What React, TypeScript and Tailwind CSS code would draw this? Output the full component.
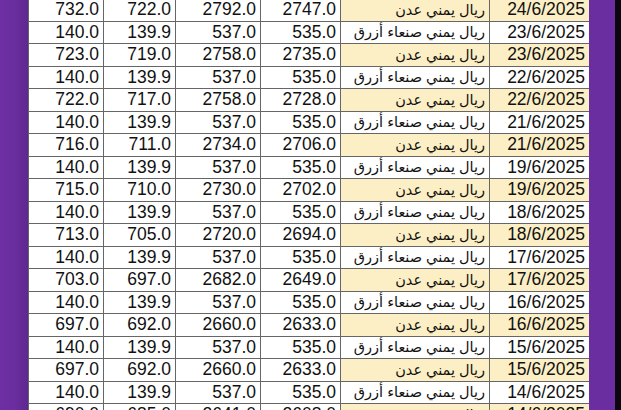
import React from 'react'

type Row = {
    buy: string
    sell: string
    buy2: string
    sell2: string
    aden: boolean
    date: string
}

const ADEN = 'ريال يمني عدن'
const SANAA = 'ريال يمني صنعاء أزرق'

const sanaa = (date: string): Row => ({
    buy: '140.0',
    sell: '139.9',
    buy2: '537.0',
    sell2: '535.0',
    aden: false,
    date
})

const rows: Row[] = [
    { buy: '732.0', sell: '722.0', buy2: '2792.0', sell2: '2747.0', aden: true, date: '24/6/2025' },
    sanaa('23/6/2025'),
    { buy: '723.0', sell: '719.0', buy2: '2758.0', sell2: '2735.0', aden: true, date: '23/6/2025' },
    sanaa('22/6/2025'),
    { buy: '722.0', sell: '717.0', buy2: '2758.0', sell2: '2728.0', aden: true, date: '22/6/2025' },
    sanaa('21/6/2025'),
    { buy: '716.0', sell: '711.0', buy2: '2734.0', sell2: '2706.0', aden: true, date: '21/6/2025' },
    sanaa('19/6/2025'),
    { buy: '715.0', sell: '710.0', buy2: '2730.0', sell2: '2702.0', aden: true, date: '19/6/2025' },
    sanaa('18/6/2025'),
    { buy: '713.0', sell: '705.0', buy2: '2720.0', sell2: '2694.0', aden: true, date: '18/6/2025' },
    sanaa('17/6/2025'),
    { buy: '703.0', sell: '697.0', buy2: '2682.0', sell2: '2649.0', aden: true, date: '17/6/2025' },
    sanaa('16/6/2025'),
    { buy: '697.0', sell: '692.0', buy2: '2660.0', sell2: '2633.0', aden: true, date: '16/6/2025' },
    sanaa('15/6/2025'),
    { buy: '697.0', sell: '692.0', buy2: '2660.0', sell2: '2633.0', aden: true, date: '15/6/2025' },
    sanaa('14/6/2025'),
    { buy: '690.0', sell: '685.0', buy2: '2641.0', sell2: '2608.0', aden: true, date: '14/6/2025' }
]

const cell = 'border border-[#666] pr-[4px] text-right leading-none whitespace-nowrap'

export default function App() {
    return (
        <div
            className="flex h-[410px] w-[621px] overflow-hidden bg-white"
            style={{ fontFamily: '"Liberation Sans", Arial, "DejaVu Sans", sans-serif' }}
        >
            <div className="w-[28px] shrink-0 bg-gradient-to-r from-[#6d2fa2] via-[#6b2e9f] to-[#5e2890]" />

            <div className="w-[561px] shrink-0 -mt-[2px]">
                <table className="w-full table-fixed border-collapse text-[17.5px] text-[#111]">
                    <colgroup>
                        <col className="w-[75px]" />
                        <col className="w-[72px]" />
                        <col className="w-[85px]" />
                        <col className="w-[80px]" />
                        <col className="w-[149px]" />
                        <col className="w-[100px]" />
                    </colgroup>
                    <tbody>
                        {rows.map((r, i) => (
                            <tr key={i} className="h-[22.5px]">
                                <td className={cell}>{r.buy}</td>
                                <td className={cell}>{r.sell}</td>
                                <td className={cell}>{r.buy2}</td>
                                <td className={cell}>{r.sell2}</td>
                                <td
                                    dir="rtl"
                                    className={`${cell} pr-[3px] text-[14.5px] ${r.aden ? 'bg-[#fcefc6]' : 'bg-white'}`}
                                >
                                    {r.aden ? ADEN : SANAA}
                                </td>
                                <td className={`${cell} ${r.aden ? 'bg-[#fcefc6]' : 'bg-white'}`}>{r.date}</td>
                            </tr>
                        ))}
                    </tbody>
                </table>
            </div>

            <div className="w-[26px] shrink-0 bg-[#6b2ea0]" />
            <div className="w-[6px] shrink-0 bg-[#0b0610]" />
        </div>
    )
}
